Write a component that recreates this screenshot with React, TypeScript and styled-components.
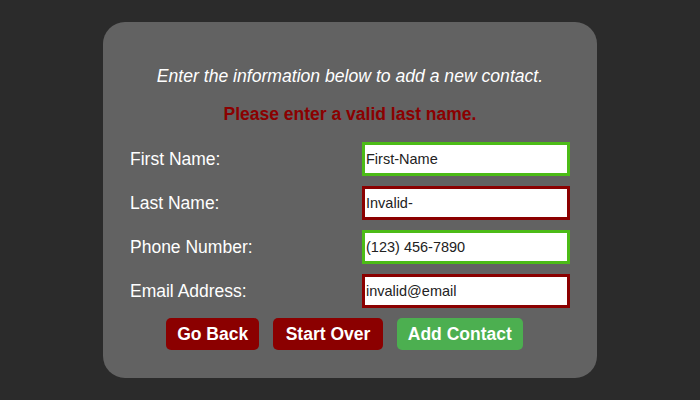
import React from "react";
import styled, { createGlobalStyle } from "styled-components";

const Global = createGlobalStyle`
  html, body { margin: 0; padding: 0; }
  body {
    background: #2b2b2b;
    font-family: "Liberation Sans", Arial, sans-serif;
  }
`;

const Page = styled.div`
  width: 700px;
  height: 400px;
  display: flex;
  align-items: center;
  justify-content: center;
`;

const Card = styled.div`
  box-sizing: border-box;
  width: 494px;
  height: 356px;
  background: #626262;
  border-radius: 22px;
  padding: 44px 27px 27px;
  display: flex;
  flex-direction: column;
  align-items: stretch;
`;

const Intro = styled.p`
  margin: 0;
  height: 21px;
  line-height: 21px;
  text-align: center;
  font-style: italic;
  font-size: 17.6px;
  color: #ffffff;
`;

const ErrorText = styled.p`
  margin: 18px 0 0;
  height: 18px;
  line-height: 18px;
  text-align: center;
  font-weight: bold;
  font-size: 17.5px;
  color: #8b0000;
`;

const Form = styled.div`
  margin-top: 19px;
  display: grid;
  grid-template-columns: 1fr 208px;
  row-gap: 10px;
  align-items: center;
`;

const Label = styled.label`
  font-size: 17.5px;
  color: #ffffff;
`;

const Input = styled.input<{ $valid: boolean }>`
  box-sizing: border-box;
  width: 208px;
  height: 34px;
  margin: 0;
  padding: 0 1px;
  border: 3px solid ${(p) => (p.$valid ? "#4cbb17" : "#8b0000")};
  background: #ffffff;
  font-family: "Liberation Sans", Arial, sans-serif;
  font-size: 14.5px;
  color: #222222;
  outline: none;
`;

const Buttons = styled.div`
  margin-top: 10px;
  padding-right: 11px;
  display: flex;
  justify-content: center;
  gap: 14px;
`;

const Button = styled.button<{ $primary?: boolean; $pad?: number }>`
  height: 32px;
  padding: 0 ${(p) => p.$pad ?? 11}px;
  border: none;
  border-radius: 5px;
  background: ${(p) => (p.$primary ? "#4caf50" : "#8b0000")};
  color: #ffffff;
  font-family: "Liberation Sans", Arial, sans-serif;
  font-weight: bold;
  font-size: 17.5px;
  cursor: pointer;
`;

const fields = [
  { label: "First Name:", value: "First-Name", valid: true },
  { label: "Last Name:", value: "Invalid-", valid: false },
  { label: "Phone Number:", value: "(123) 456-7890", valid: true },
  { label: "Email Address:", value: "invalid@email", valid: false },
];

export default function App() {
  return (
    <>
      <Global />
      <Page>
        <Card>
          <Intro>Enter the information below to add a new contact.</Intro>
          <ErrorText>Please enter a valid last name.</ErrorText>
          <Form>
            {fields.map((f) => (
              <React.Fragment key={f.label}>
                <Label>{f.label}</Label>
                <Input $valid={f.valid} defaultValue={f.value} />
              </React.Fragment>
            ))}
          </Form>
          <Buttons>
            <Button>Go Back</Button>
            <Button $pad={12.5}>Start Over</Button>
            <Button $primary>Add Contact</Button>
          </Buttons>
        </Card>
      </Page>
    </>
  );
}
